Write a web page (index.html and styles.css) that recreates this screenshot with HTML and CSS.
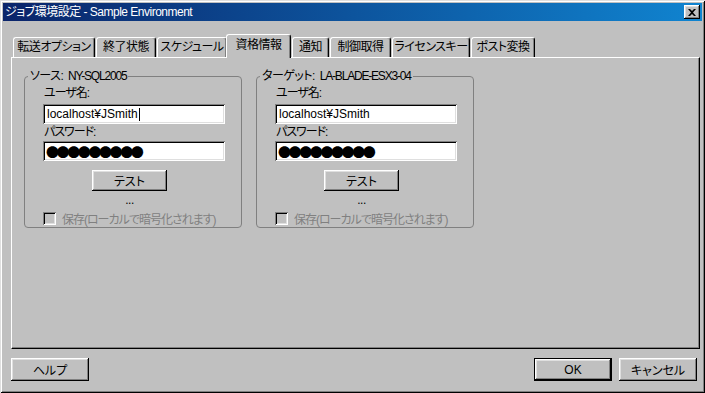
FILE: index.html
```html
<!DOCTYPE html>
<html lang="ja">
<head>
  <meta charset="UTF-8">
  <meta name="viewport" content="width=device-width, initial-scale=1.0">
  <title>ジョブ環境設定 - Sample Environment</title>
  <link rel="stylesheet" href="styles.css">
</head>
<body>
  <div class="window">
    <div class="titlebar">
      <span class="title">ジョブ環境設定 - Sample Environment</span>
      <button class="close-btn" aria-label="閉じる">
        <svg width="8" height="7" viewBox="0 0 8 7"><path d="M0 0h2l2 2 2-2h2L5 3.5 8 7H6L4 5 2 7H0l3-3.5z" fill="#000"/></svg>
      </button>
    </div>

    <div class="dialog-body">
      <div class="tabs">
        <div class="tab tab-transfer">転送オプション</div>
        <div class="tab tab-exit">終了状態</div>
        <div class="tab tab-schedule">スケジュール</div>
        <div class="tab tab-active">資格情報</div>
        <div class="tab tab-notify">通知</div>
        <div class="tab tab-control">制御取得</div>
        <div class="tab tab-license">ライセンスキー</div>
        <div class="tab tab-post">ポスト変換</div>
      </div>

      <div class="panel">
        <div class="groups">
          <fieldset class="group">
            <legend>ソース: <span class="legend-host">NY-SQL2005</span></legend>
            <div class="group-body">
              <label class="field-label">ユーザ名:</label>
              <div class="textbox">localhost¥JSmith<span class="caret"></span></div>
              <label class="field-label field-label-next">パスワード:</label>
              <div class="textbox textbox-next password">●●●●●●●●●</div>
              <div class="test-area">
                <button class="btn test-btn">テスト</button>
                <div class="ellipsis">...</div>
              </div>
              <div class="save-row">
                <span class="checkbox"></span>
                <span class="save-text">保存(ローカルで暗号化されます)</span>
              </div>
            </div>
          </fieldset>

          <fieldset class="group">
            <legend>ターゲット: <span class="legend-host">LA-BLADE-ESX3-04</span></legend>
            <div class="group-body">
              <label class="field-label">ユーザ名:</label>
              <div class="textbox">localhost¥JSmith</div>
              <label class="field-label field-label-next">パスワード:</label>
              <div class="textbox textbox-next password">●●●●●●●●●</div>
              <div class="test-area">
                <button class="btn test-btn">テスト</button>
                <div class="ellipsis">...</div>
              </div>
              <div class="save-row">
                <span class="checkbox"></span>
                <span class="save-text">保存(ローカルで暗号化されます)</span>
              </div>
            </div>
          </fieldset>
        </div>
      </div>

      <div class="footer">
        <button class="btn footer-btn">ヘルプ</button>
        <div class="footer-right">
          <button class="btn btn-default footer-btn">OK</button>
          <button class="btn footer-btn">キャンセル</button>
        </div>
      </div>
    </div>
  </div>
</body>
</html>
```

FILE: styles.css
```css
* {
  box-sizing: border-box;
}
body {
  margin: 0;
  background: #c0c0c0;
  font-family: "Liberation Sans", "Noto Sans CJK JP", sans-serif;
  font-size: 12px;
  font-feature-settings: "palt";
  letter-spacing: -0.5px;
  color: #000;
}
.window {
  width: 705px;
  height: 393px;
  padding: 3px;
  background: #c0c0c0;
  box-shadow: inset 1px 1px #dfdfdf, inset -1px -1px #000,
              inset 2px 2px #fff, inset -2px -2px #808080;
}

/* title bar */
.titlebar {
  height: 18px;
  display: flex;
  align-items: center;
  justify-content: space-between;
  padding: 0 2px 0 2px;
  background: linear-gradient(to right, #0a246a, #1084d0);
}
.title {
  color: #fff;
  line-height: 14px;
}
.close-btn {
  width: 16px;
  height: 14px;
  padding: 0;
  border: none;
  display: flex;
  align-items: center;
  justify-content: center;
  background: #c0c0c0;
  box-shadow: inset -1px -1px #000, inset 1px 1px #fff,
              inset -2px -2px #808080, inset 2px 2px #dfdfdf;
}

.dialog-body {
  padding: 13px 2px 0 8px;
}

/* tabs */
.tabs {
  display: flex;
  gap: 1px;
  height: 24px;
  margin-bottom: -1px;
  padding-left: 2px;
  position: relative;
  z-index: 1;
}
.tab {
  flex: none;
  height: 20px;
  margin-top: 3px;
  line-height: 19px;
  text-align: center;
  background: #c0c0c0;
  border-top: 1px solid #fff;
  border-left: 1px solid #fff;
  border-right: 1px solid #000;
  border-radius: 3px 3px 0 0;
  box-shadow: inset -1px 0 #808080;
  white-space: nowrap;
}
.tab-transfer { width: 82px; }
.tab-exit { width: 60px; }
.tab-schedule { width: 70px; }
.tab-notify { width: 37px; }
.tab-control { width: 61px; }
.tab-license { width: 78px; }
.tab-post { width: 64px; }
.tab-active {
  width: 65px;
  height: 24px;
  margin: 0 0 0 -2px;
  padding-bottom: 2px;
  line-height: 20px;
  position: relative;
}

/* panel */
.panel {
  height: 292px;
  padding: 11px 0 0 12px;
  border-top: 1px solid #fff;
  border-left: 1px solid #fff;
  border-right: 1px solid #000;
  border-bottom: 1px solid #000;
  box-shadow: inset -1px -1px #808080;
}
.groups {
  display: flex;
  gap: 14px;
}
.group {
  width: 218px;
  margin: 0;
  padding: 0;
  border: 1px solid #808080;
  border-radius: 4px;
}
.group legend {
  margin-left: 3px;
  padding: 0 2px;
  line-height: 14px;
}
.legend-host {
  margin-left: 2px;
  letter-spacing: -1.2px;
}
.group-body {
  padding: 3px 0 1px 18px;
}
.field-label {
  display: block;
  line-height: 15px;
  padding-left: 1px;
  letter-spacing: -1px;
}
.field-label-next {
  margin-top: 1px;
}
.textbox {
  width: 182px;
  height: 20px;
  margin-top: 3px;
  padding: 0 4px;
  display: flex;
  align-items: center;
  background: #fff;
  letter-spacing: 0;
  box-shadow: inset 1px 1px #808080, inset -1px -1px #fff,
              inset 2px 2px #000, inset -2px -2px #dfdfdf;
  white-space: nowrap;
}
.textbox-next {
  margin-top: 1px;
}
.caret {
  width: 1px;
  height: 13px;
  margin-left: 1px;
  background: #000;
}
.password {
  font-family: "Noto Sans CJK JP", sans-serif;
  font-size: 13px;
  letter-spacing: -2.4px;
  padding-left: 3px;
}

.test-area {
  width: 75px;
  margin: 9px 0 0 49px;
  text-align: center;
}
.btn {
  font: inherit;
  color: #000;
  border: none;
  padding: 0;
  background: #c0c0c0;
  box-shadow: inset -1px -1px #000, inset 1px 1px #fff,
              inset -2px -2px #808080, inset 2px 2px #dfdfdf;
}
.test-btn {
  width: 75px;
  height: 21px;
}
.ellipsis {
  margin-top: 3px;
  line-height: 12px;
}
.save-row {
  display: flex;
  align-items: center;
  gap: 6px;
  height: 15px;
  margin-top: 5px;
}
.checkbox {
  width: 13px;
  height: 13px;
  background: #c0c0c0;
  box-shadow: inset 1px 1px #808080, inset -1px -1px #fff,
              inset 2px 2px #000, inset -2px -2px #dfdfdf;
}
.save-text {
  color: #808080;
  letter-spacing: -1px;
}

/* footer */
.footer {
  display: flex;
  justify-content: space-between;
  margin-top: 9px;
  padding-right: 3px;
}
.footer-right {
  display: flex;
  gap: 7px;
}
.footer-btn {
  width: 78px;
  height: 23px;
}
.btn-default {
  box-shadow: inset 0 0 0 1px #000, inset -2px -2px #000, inset 2px 2px #fff,
              inset -3px -3px #808080, inset 3px 3px #dfdfdf;
}
```
